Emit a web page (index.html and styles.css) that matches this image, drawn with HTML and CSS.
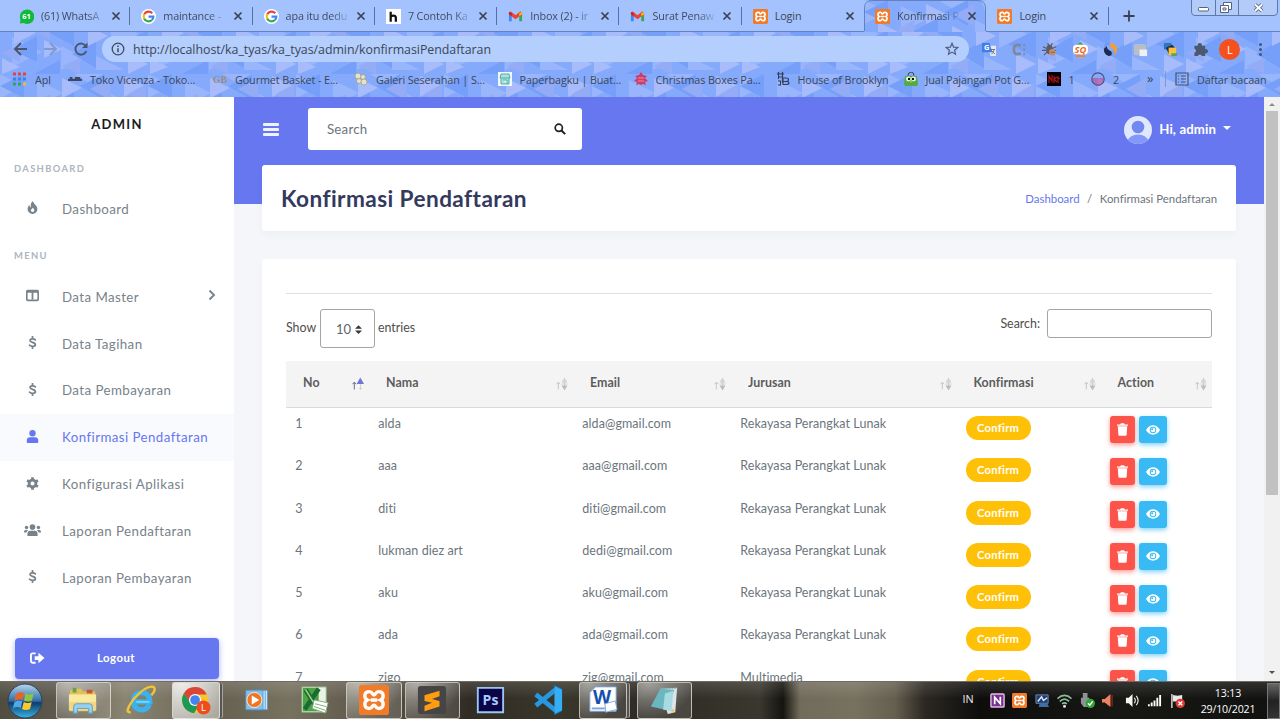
FILE: index.html
```html
<!DOCTYPE html>
<html lang="id">
<head>
<meta charset="utf-8">
<title>Konfirmasi Pendaftaran</title>
<link rel="stylesheet" href="styles.css">
</head>
<body>
<svg class="defs" width="0" height="0">
  <defs>
    <linearGradient id="glass" x1="0" y1="0" x2="0" y2="1"><stop offset="0" stop-color="#b7d7ef"/><stop offset=".5" stop-color="#2f6da5"/><stop offset=".55" stop-color="#123a68"/><stop offset="1" stop-color="#37b5e6"/></linearGradient>
    <pattern id="tri" width="148" height="74" patternUnits="userSpaceOnUse">
      <rect width="148" height="74" fill="#86aafb"/>
      <path fill="#99b6fc" d="M0 0l24 12L0 24zM37 6l26 13-26 13zM74 0h30v18zM111 20l28 14-28 14zM12 37l30 15-30 15zM61 46l24 12-24 12zM96 56l28 14H96z"/>
      <path fill="#769ffa" d="M24 0v24L0 12zM74 18v28L48 32zM104 0v26L80 12zM148 30v28l-28-14zM37 36v26L12 50zM96 40v28L72 54zM60 60v14H34z"/>
      <path fill="#a8bbfb" d="M14 22l22 11-22 11zM62 4l20 10-20 10zM88 26l20 10-20 10zM124 2l22 10-22 11zM44 40l18 9-18 9zM128 54l20 10-20 10zM2 58l18 9-18 7z"/>
      <path fill="#94abf6" d="M110 4v22L90 15zM50 20v20L32 30zM146 10v20l-18-10zM80 58v16L62 66zM20 44v18L2 53z"/>
    </pattern>
    <symbol id="x" viewBox="0 0 10 10"><path d="M1.500 1.500l7 7m0-7l-7 7" stroke="#39434f" stroke-width="1.700"/></symbol>
    <symbol id="goog" viewBox="0 0 16 16"><circle cx="8" cy="8" r="8" fill="#fff"/><g fill="none" stroke-width="2.300"><path d="M12 4.500A5.200 5.200 0 0 0 3.400 5.700" stroke="#ea4335"/><path d="M3.400 5.700a5.200 5.200 0 0 0 0 4.600" stroke="#fbbc05"/><path d="M3.400 10.300A5.200 5.200 0 0 0 11.600 11.800" stroke="#34a853"/><path d="M11.600 11.800A5.200 5.200 0 0 0 13.200 8.100H8" stroke="#4285f4"/></g></symbol>
    <symbol id="gmail" viewBox="0 0 16 16"><path fill="#4285f4" d="M1 4.500v8.500h3V6z"/><path fill="#34a853" d="M15 4.500v8.500h-3V6z"/><path fill="#ea4335" d="M1 3.500L3 2.700l5 4 5-4 2 .800v2L8 11 1 5.500z"/><path fill="#c5221f" d="M1 3.300l3 1v3.500l-3-2.300z"/><path fill="#fbbc04" d="M15 3.300l-3 1v3.500l3-2.300z"/></symbol>
    <symbol id="xampp" viewBox="0 0 16 16"><rect width="16" height="16" rx="1.500" fill="#f37b27"/><path d="M5.500 3.500c-3 0-3 3.600-1 4.500-2 .900-2 4.500 1 4.500 1.800 0 1.500-1.800 2.500-1.800s.700 1.800 2.500 1.800c3 0 3-3.600 1-4.500 2-.900 2-4.500-1-4.500-1.800 0-1.500 1.800-2.500 1.800s-.700-1.800-2.500-1.800zM6.300 8h3.400" fill="none" stroke="#fff" stroke-width="1.800"/></symbol>
    <symbol id="usd" viewBox="0 0 12 16"><path d="M9.500 4.700C8 3.300 3 2.900 3 5.500c0 2.600 6.500 1.900 6.500 5 0 3-5.500 2.600-7 .900M6 .800V3m0 10v2.200" fill="none" stroke="currentColor" stroke-width="2.200" stroke-linecap="round"/></symbol>
    <symbol id="trash" viewBox="0 0 14 16"><path fill="#fff" d="M0 1.500h4L5 0h4l1 1.500h4v1.700H0zM1 4h12l-.700 10.500a1.500 1.500 0 0 1-1.500 1.500H3.200a1.500 1.500 0 0 1-1.500-1.500z"/></symbol>
    <symbol id="eye" viewBox="0 0 18 12"><path fill="#fff" d="M0 6C4-2 14-2 18 6 14 14 4 14 0 6z"/><circle cx="9" cy="6" r="4.200" fill="#3abaf4"/><circle cx="9" cy="6" r="3" fill="#fff"/><circle cx="8" cy="5" r="1.300" fill="#3abaf4"/></symbol>
    <symbol id="sort" viewBox="0 0 12 14"><path d="M2.300 12.500V5.200M.500 7.200l1.800-2 1.800 2M8.500 3v9" fill="none" stroke="#c7c7c7" stroke-width="1"/><path fill="#d2d2d2" d="M8.500 .500l3 5h-6z"/><path d="M5.500 7h6" stroke="#d2d2d2"/><path fill="#bcbcbc" d="M8.500 13.500l3-5h-6z"/></symbol>
    <symbol id="sorta" viewBox="0 0 12 14"><path d="M2.300 12.500V5.200M.500 7.200l1.800-2 1.800 2" fill="none" stroke="#6b6b8c" stroke-width="1"/><path d="M8.500 7v6M7 11.500h3" stroke="#d2d2d2"/><path fill="#6d76dc" d="M8.300 .500L12 7H4.600z"/></symbol>
  </defs>
</svg>
<div class="screen">
  <header class="chrome">
    <svg class="pattern" width="1280" height="97"><rect width="1280" height="97" fill="url(#tri)"/></svg>
    <div class="tabs">
      <div class="tab"><svg class="fav" viewBox="0 0 16 16"><path d="M1 15.500L1.500 11A7.700 7.700 0 1 1 5 15z" fill="#12b83b"/><text x="8" y="11" font-size="8" font-weight="700" text-anchor="middle" fill="#fff">61</text></svg><span class="t">(61) WhatsA</span><svg class="cl"><use href="#x"/></svg></div>
      <div class="tab"><svg class="fav"><use href="#goog"/></svg><span class="t">maintance -</span><svg class="cl"><use href="#x"/></svg></div>
      <div class="tab"><svg class="fav"><use href="#goog"/></svg><span class="t">apa itu dedu</span><svg class="cl"><use href="#x"/></svg></div>
      <div class="tab"><svg class="fav" viewBox="0 0 16 16"><rect width="16" height="16" fill="#fff"/><path d="M5 3v10.500M5 9q0-2 2.700-2t2.800 2v4.500" fill="none" stroke="#111" stroke-width="2.400"/></svg><span class="t">7 Contoh Ka</span><svg class="cl"><use href="#x"/></svg></div>
      <div class="tab"><svg class="fav"><use href="#gmail"/></svg><span class="t">Inbox (2) - ir</span><svg class="cl"><use href="#x"/></svg></div>
      <div class="tab"><svg class="fav"><use href="#gmail"/></svg><span class="t">Surat Penaw</span><svg class="cl"><use href="#x"/></svg></div>
      <div class="tab nosep"><svg class="fav"><use href="#xampp"/></svg><span class="t full">Login</span><svg class="cl"><use href="#x"/></svg></div>
      <div class="tab active"><svg class="tabbg" width="122" height="32"><path d="M0 0h122v32H0z" fill="url(#tri)"/><path d="M0 0v22Q1 1 7 .500H0zM122 0v22Q121 1 115 .500h7z" fill="#a3c2fe"/><path d="M.500 31V8Q.500 .500 8 .500h106q7.500 0 7.500 7.500v23" fill="none" stroke="#6382bd"/></svg><svg class="fav"><use href="#xampp"/></svg><span class="t">Konfirmasi P</span><svg class="cl"><use href="#x"/></svg></div>
      <div class="tab"><svg class="fav"><use href="#xampp"/></svg><span class="t full">Login</span><svg class="cl"><use href="#x"/></svg></div>
      <svg class="plus" viewBox="0 0 12 12"><path d="M6 .500v11M.500 6h11" stroke="#39434f" stroke-width="1.800"/></svg>
      <svg class="winbtn" viewBox="0 0 87 16"><path d="M.500 0v12q0 3.500 3.500 3.500h79q3.500 0 3.500-3.500V0M24.500 0v15M47.500 0v15" fill="#b3cbf8" stroke="#5f79a6"/><g fill="#fff" stroke="#51637f"><rect x="7.500" y="7.500" width="10" height="3.500" rx="1"/><path d="M32.500 2.500h8v7h-8z"/><path d="M29.500 5.500h8v7h-8z"/><path d="M32 8h3v2h-3z"/></g><path d="M64 4.500l7 6.500m0-6.500L64 11" stroke="#51637f" stroke-width="3.600"/><path d="M64 4.500l7 6.500m0-6.500L64 11" stroke="#fff" stroke-width="1.900"/></svg>
    </div>
    <div class="toolbar">
      <svg class="nav" viewBox="0 0 90 26"><g fill="none" stroke-width="1.900"><path d="M27 13H15.500m5.500-6l-6 6 6 6" stroke="#46566d"/><path d="M44 13h11.500M50 7l6 6-6 6" stroke="#7f9bd0"/><path d="M86 10.500A5.600 5.600 0 1 0 86.300 15" stroke="#46566d"/></g><path d="M87.500 6.500V12H82z" fill="#46566d"/></svg>
      <div class="url">
        <svg width="14" height="14" viewBox="0 0 14 14"><circle cx="7" cy="7" r="5.800" fill="none" stroke="#3f4c5f" stroke-width="1.300"/><path d="M7 6.200v4M7 3.500v1.500" stroke="#3f4c5f" stroke-width="1.500"/></svg>
        <span class="addr">http://localhost/ka_tyas/ka_tyas/admin/konfirmasiPendaftaran</span>
        <svg class="star" width="14" height="14" viewBox="0 0 14 14"><path d="M7 1.300l1.600 3.800 4.100.400-3.100 2.700.9 4L7 10.100l-3.500 2.100.9-4L1.300 5.500l4.100-.400z" fill="none" stroke="#4d5f7c" stroke-width="1.200"/></svg>
      </div>
      <div class="exts">
        <svg viewBox="0 0 16 16"><path fill="#e6e8ec" d="M6 4h9v11H9z"/><path fill="#3f7de8" d="M0 1h8l3 10H0z"/><text x="2" y="9" font-size="8" fill="#fff" font-weight="700">G</text><path d="M9 8h5m-1 0q-1 4-3 5m0-4l4 4" stroke="#657387" fill="none"/></svg>
        <svg viewBox="0 0 16 16"><path d="M9.500 4Q2 1 2 8t7.500 4" fill="none" stroke="#7f8997" stroke-width="2.800"/><path d="M13 2v2m0 3v2m0 3v2" stroke="#7f8997" stroke-width="2"/></svg>
        <svg viewBox="0 0 16 16"><path d="M1 5l4 2M0 9h5M2 14l4-4M6 1l2 4M11 1L9 5M15 5l-4 2M15 9h-4" stroke="#565c66" stroke-width="1.300"/><ellipse cx="8" cy="8" rx="3.500" ry="5" fill="#5c5d62"/><circle cx="11" cy="11" r="3.500" fill="#c68b6b"/><path d="M9 11h5" stroke="#765"/></svg>
        <svg viewBox="0 0 16 16"><path fill="#3cae45" d="M3 4l5-4 4 4z"/><rect y="3" width="16" height="10" rx="4" fill="#fff"/><text x="8" y="11.500" font-size="10" font-weight="700" font-style="italic" text-anchor="middle" fill="#ee6a1e">SQ</text><path d="M3 15h10" stroke="#f58220" stroke-width="2"/></svg>
        <svg viewBox="0 0 16 16"><path d="M6.500 1.500C0 2 0 8 5 9.500c3 .800 3.500 2 2.500 5C0 14-2 3 6.500 1.500z" fill="#1d2d50"/><path d="M4 4q0 4 4 5.500 2 1 1 4.500L6 15Q1 13 1 8z" fill="#1d2d50"/><path d="M8 1q7 1 7 7 0 4-3 6 1-5-2-7Q7 5 8 1z" fill="#f79d2c"/></svg>
        <svg viewBox="0 0 16 16"><rect x="1" y="2" width="13" height="12" rx="2" fill="#b6bec8"/><rect x="7" y="8" width="8" height="7" fill="#eef0f2"/></svg>
        <svg viewBox="0 0 16 16"><path fill="#2e77be" d="M1 1h8v7H1z"/><path fill="#222d35" d="M3 6l7-3 4 5-7 6z"/><path fill="#ffc13b" d="M6 6h8v8H6z"/><path fill="#55a84b" d="M9 12h6v3H9z"/></svg>
        <svg viewBox="0 0 16 16"><path fill="#4a596e" d="M1.500 4H5a2.300 2.300 0 1 1 4.400 0H13v3.600a2.300 2.300 0 1 1 0 4.400v3H9.500a2.200 2.200 0 0 0-4.300 0H1.500v-3.600a2.200 2.200 0 0 0 0-4.300z"/></svg>
      </div>
      <span class="avatar">L</span>
      <span class="kebab"><i></i><i></i><i></i></span>
    </div>
    <div class="marks">
      <span class="bm b1"><svg viewBox="0 0 14 14"><path stroke="#e0443c" stroke-width="3" stroke-dasharray="3 2" d="M0 2h14"/><path stroke="#3b82e8" stroke-width="3" stroke-dasharray="3 2" d="M0 7h14"/><path stroke="#35a35b" stroke-width="3" stroke-dasharray="3 2" d="M0 12h9"/><path stroke="#f4b82c" stroke-width="3" d="M10 12h3"/></svg>Apl</span>
      <span class="bm b2"><svg viewBox="0 0 16 14"><path d="M0 8h16M2 6h3m3 0h6" stroke="#414962" stroke-width="2.500"/></svg>Toko Vicenza - Toko...</span>
      <span class="bm b3"><svg viewBox="0 0 16 14"><text x="8" y="11" text-anchor="middle" font-family="Liberation Serif" font-size="11" font-weight="700" textLength="16" fill="#a08a78">GB</text></svg>Gourmet Basket - E...</span>
      <span class="bm b4"><svg viewBox="0 0 14 14"><g fill="#e6e1ca" stroke="#9b9b80" stroke-width=".7"><circle cx="4" cy="4" r="3"/><circle cx="9" cy="5" r="2.500"/><circle cx="5" cy="9" r="2.500"/><circle cx="10" cy="10" r="3"/></g></svg>Galeri Seserahan | S...</span>
      <span class="bm b5"><svg viewBox="0 0 14 14"><path fill="#f2f8fa" d="M0 0h14v14H0z"/><path d="M3 2h8l1 4H2zM3 6v6h8V6M5 8h4v4" fill="#aee0dc" stroke="#4cb0ab"/></svg>Paperbagku | Buat...</span>
      <span class="bm b6"><svg viewBox="0 0 14 14"><path fill="#ce3c68" d="M7 0l2 3 4 1-2 2 3 3-3 1 1 3-3-1-2 1-2-1-3 1 1-3-3-1 3-3-2-2 4-1z"/><path d="M4 6h6M4 9h6" stroke="#e78cab"/></svg>Christmas Boxes Pa...</span>
      <span class="bm b7"><svg viewBox="0 0 14 14"><path d="M2.500 0v7M6.500 0v11M1 2h7M2 5h5M7 6h3q2.500 0 2.500 1.700T10 9.500H7m3 0q3 0 3 1.500t-3 1.500H7V6M2 9h2.500v4H2" fill="none" stroke="#333f58" stroke-width="1.100"/></svg>House of Brooklyn</span>
      <span class="bm b8"><svg viewBox="0 0 14 14"><path d="M4 4q0-4 3-4t3 4" fill="none" stroke="#3c4a42"/><path fill="#4fae3f" d="M1 4h12l1 8-1 2H1l-1-2z"/><circle cx="4.500" cy="7" r="2.400" fill="#fff"/><circle cx="9.500" cy="7" r="2.400" fill="#fff"/><circle cx="5" cy="7" r="1.200"/><circle cx="9" cy="7" r="1.200"/><path fill="#f6b83d" d="M6 9h2l-1 2z"/></svg>Jual Pajangan Pot G...</span>
      <span class="bm b9"><svg viewBox="0 0 14 14"><path d="M0 0h14v14H0z"/><path d="M2 11V4l3 5V3m2 8V4m0 3l3-2m-3 2l3 3m1-6v7m0-4l2-1" fill="none" stroke="#b61218" stroke-width="1.200"/></svg>1</span>
      <span class="bm b10"><svg viewBox="0 0 14 14"><circle cx="7" cy="7" r="6.200" fill="none" stroke="#4a4f80" stroke-width="1.200"/><path d="M1 7h12M2 9h10M3 11h8M5 13h4" stroke="#bd3779" stroke-width="1.200"/></svg>2</span>
      <span class="more">»</span>
      <span class="bm b11"><svg viewBox="0 0 14 14"><path d="M1 1h12v12H1zM3 4h1m2 0h5M3 7h1m2 0h5M3 10h1m2 0h5" fill="none" stroke="#45536b" stroke-width="1.200"/></svg>Daftar bacaan</span>
    </div>
  </header>

  <main class="view">
    <aside class="side">
      <div class="brand">ADMIN</div>
      <div class="sec">DASHBOARD</div>
      <a class="item"><svg viewBox="0 0 12 16"><path fill="currentColor" d="M6.500 0c.5 4 5.500 5 5.500 10a6 6 0 0 1-12 0C0 7.500 1 6 2.300 4.800 2.500 7 3 7.500 4 8 3.500 4.500 4 2 6.500 0z"/><path fill="#fff" d="M6.500 8c.3 1.500 1.800 1.800 1.800 3.300a2.200 2.200 0 0 1-4.400 0c0-1.400 2.300-1.700 2.600-3.300z"/></svg>Dashboard</a>
      <div class="sec second">MENU</div>
      <a class="item"><svg viewBox="0 0 16 14"><rect x="1" y="1" width="14" height="12" rx="1" fill="none" stroke="currentColor" stroke-width="2"/><path d="M1 2.500h14M8 2v10" stroke="currentColor" stroke-width="2.200"/></svg>Data Master<svg class="chev" viewBox="0 0 8 12"><path d="M1.500 1.500L6 6l-4.500 4.500" fill="none" stroke="currentColor" stroke-width="1.900"/></svg></a>
      <a class="item"><svg><use href="#usd"/></svg>Data Tagihan</a>
      <a class="item"><svg><use href="#usd"/></svg>Data Pembayaran</a>
      <a class="item on"><svg viewBox="0 0 14 16"><circle cx="7" cy="4" r="3.900" fill="currentColor"/><path fill="currentColor" d="M0 15v-2q0-4 4-4h6q4 0 4 4v2q0 1-1 1H1q-1 0-1-1z"/></svg>Konfirmasi Pendaftaran</a>
      <a class="item"><svg viewBox="0 0 16 16"><circle cx="8" cy="8" r="4.200" fill="none" stroke="currentColor" stroke-width="3.400"/><path d="M8 .300v3M8 12.700v3M1.300 4.200l2.600 1.500M12.100 10.300l2.600 1.500M1.300 11.800l2.600-1.500M12.100 5.700l2.600-1.500" stroke="currentColor" stroke-width="3.400"/></svg>Konfigurasi Aplikasi</a>
      <a class="item"><svg class="wide" viewBox="0 0 20 14"><g fill="currentColor"><circle cx="10" cy="3.500" r="3.300"/><circle cx="3" cy="4" r="2"/><circle cx="17" cy="4" r="2"/><path d="M4 14v-2q0-4 3.500-4h5q3.500 0 3.500 4v2zM0 10V9q0-2 2-2h3q-2 1.500-2 3zM20 10V9q0-2-2-2h-3q2 1.500 2 3z"/></g></svg>Laporan Pendaftaran</a>
      <a class="item"><svg><use href="#usd"/></svg>Laporan Pembayaran</a>
      <a class="logout"><svg viewBox="0 0 16 12"><path d="M6 1H3Q1 1 1 3v6q0 2 2 2h3" fill="none" stroke="#fff" stroke-width="2"/><path fill="#fff" d="M5 4h4V.500L15.500 6 9 11.500V8H5z"/></svg><span>Logout</span></a>
    </aside>
    <section class="content">
      <nav class="top">
        <span class="burger"><i></i><i></i><i></i></span>
        <div class="find"><span>Search</span><svg viewBox="0 0 14 14"><circle cx="5.600" cy="5.600" r="4.200" fill="none" stroke="#222" stroke-width="2"/><path d="M8.700 8.700L13 13" stroke="#222" stroke-width="2.400"/></svg></div>
        <svg class="me" viewBox="0 0 28 28"><defs><clipPath id="round"><circle cx="14" cy="14" r="14"/></clipPath></defs><circle cx="14" cy="14" r="14" fill="#e0e8ff"/><g clip-path="url(#round)"><circle cx="14" cy="11" r="6.300" fill="#7288ee"/><ellipse cx="14" cy="25" rx="10" ry="6.500" fill="#8298fa"/></g></svg>
        <span class="hi">Hi, admin</span><i class="caret"></i>
      </nav>
      <div class="card title"><h1>Konfirmasi Pendaftaran</h1><div class="crumb"><a>Dashboard</a><span>/</span><b>Konfirmasi Pendaftaran</b></div></div>
      <div class="card body">
        <div class="ctl">
          <div class="len"><span class="w-show">Show</span><span class="sel">10<svg viewBox="0 0 8 10"><path fill="#343a40" d="M4 0l4 4H0zM4 10l4-4H0z"/></svg></span><span>entries</span></div>
          <div class="flt"><span>Search:</span><span class="inp"></span></div>
        </div>
        <div class="row head"><div>No<svg><use href="#sorta"/></svg></div><div>Nama<svg><use href="#sort"/></svg></div><div>Email<svg><use href="#sort"/></svg></div><div>Jurusan<svg><use href="#sort"/></svg></div><div>Konfirmasi<svg><use href="#sort"/></svg></div><div>Action<svg><use href="#sort"/></svg></div></div>
        <div class="row"><div>1</div><div>alda</div><div>alda@gmail.com</div><div>Rekayasa Perangkat Lunak</div><div><span class="pill">Confirm</span></div><div class="act"><span class="del"><svg><use href="#trash"/></svg></span><span class="see"><svg><use href="#eye"/></svg></span></div></div>
        <div class="row"><div>2</div><div>aaa</div><div>aaa@gmail.com</div><div>Rekayasa Perangkat Lunak</div><div><span class="pill">Confirm</span></div><div class="act"><span class="del"><svg><use href="#trash"/></svg></span><span class="see"><svg><use href="#eye"/></svg></span></div></div>
        <div class="row"><div>3</div><div>diti</div><div>diti@gmail.com</div><div>Rekayasa Perangkat Lunak</div><div><span class="pill">Confirm</span></div><div class="act"><span class="del"><svg><use href="#trash"/></svg></span><span class="see"><svg><use href="#eye"/></svg></span></div></div>
        <div class="row"><div>4</div><div>lukman diez art</div><div>dedi@gmail.com</div><div>Rekayasa Perangkat Lunak</div><div><span class="pill">Confirm</span></div><div class="act"><span class="del"><svg><use href="#trash"/></svg></span><span class="see"><svg><use href="#eye"/></svg></span></div></div>
        <div class="row"><div>5</div><div>aku</div><div>aku@gmail.com</div><div>Rekayasa Perangkat Lunak</div><div><span class="pill">Confirm</span></div><div class="act"><span class="del"><svg><use href="#trash"/></svg></span><span class="see"><svg><use href="#eye"/></svg></span></div></div>
        <div class="row"><div>6</div><div>ada</div><div>ada@gmail.com</div><div>Rekayasa Perangkat Lunak</div><div><span class="pill">Confirm</span></div><div class="act"><span class="del"><svg><use href="#trash"/></svg></span><span class="see"><svg><use href="#eye"/></svg></span></div></div>
        <div class="row"><div>7</div><div>zigo</div><div>zig@gmail.com</div><div>Multimedia</div><div><span class="pill">Confirm</span></div><div class="act"><span class="del"><svg><use href="#trash"/></svg></span><span class="see"><svg><use href="#eye"/></svg></span></div></div>
      </div>
    </section>
    <div class="scroll"><i class="up"></i><div class="thumb"></div><i class="down"></i></div>
  </main>

  <footer class="bar">
    <div class="start"><svg viewBox="0 0 36 36"><circle cx="18" cy="18" r="17" fill="url(#glass)" stroke="#29415a"/><path fill="#e9622b" d="M9 11q4-3 8-1l-1.500 7q-4-2-8 1z"/><path fill="#8fc641" d="M18.500 10.500q4 2 8 0L25 17.500q-4 2-8 0z"/><path fill="#4da9e8" d="M7.300 19.300q4-2.500 8-.8L13.700 25q-4-2-7.700.500z"/><path fill="#fdc82f" d="M16.700 19q4 2 8 0L23 26q-4 2-8 0z"/></svg></div>
    <div class="app box"><svg viewBox="0 0 32 32"><path fill="#e5bf58" d="M2 6l4-2h8l2 3h13v21H2z"/><path fill="#63a34b" d="M5 3h4v5H5z"/><path fill="#c9543c" d="M20 5h6v4h-6z"/><path fill="#fae9a0" d="M1 10h29v17H1z"/><path fill="#f3d77c" d="M1 18h29v9H1z"/><path fill="#98d0ef" stroke="#5aa1cd" d="M6 30v-7q0-3 3-3h14q3 0 3 3v7h-4v-5H10v5z"/></svg></div>
    <div class="app"><svg viewBox="0 0 32 32"><path d="M25 21q-3 6-9 5.500-8-1-8-9.500T16.500 8Q25 8 25.500 18H10" fill="none" stroke="#3ab2ee" stroke-width="5.500"/><path d="M25 18H11" stroke="#8cdcfb" stroke-width="1.500"/><path d="M5 29Q-3 30 9 14 22 0 29 2q4 2-2 9" fill="none" stroke="#f4c437" stroke-width="2.600"/></svg></div>
    <div class="app box multi lit"><svg viewBox="0 0 32 32"><circle cx="15" cy="16" r="14" fill="#f6c52f"/><path fill="#dc4437" d="M3 9a14 14 0 0 1 24.500 1H15l-5 9z"/><path fill="#1b9a55" d="M3 9a14 14 0 0 0 11 21l6-10-9 0z"/><circle cx="15" cy="16" r="6.500" fill="#fff"/><circle cx="15" cy="16" r="5.200" fill="#4384ee"/><circle cx="24" cy="24" r="7.500" fill="#ee4d20"/><text x="24" y="27.500" font-size="10" fill="#fff" text-anchor="middle">L</text></svg></div>
    <div class="app"><svg class="sm" viewBox="0 0 32 32"><path fill="#c8e4f6" stroke="#5795c4" d="M10 3h20v26H10zM7 3h20v26H7z"/><path fill="#86bfe8" stroke="#4f8fc1" d="M1 3h23v26H1z"/><circle cx="12.500" cy="16" r="10" fill="#f07522" stroke="#fff"/><path fill="#fff" d="M9 10l10 6-10 6z"/></svg></div>
    <div class="app"><svg viewBox="0 0 32 32"><path fill="#e9f3e3" stroke="#87ae79" d="M2 2h26v27H2z"/><path fill="#50a247" d="M3 3h17v25H3z"/><path d="M6 5l13 21M20 4L5 26" stroke="#196d34" stroke-width="5"/><path d="M6 5l13 21" stroke="#a3d880" stroke-width="1.500"/><path fill="#fff" stroke="#7caa75" d="M15 16l15 3-3 11-14-5z"/><path d="M16 20l12 3M15 23l12 4" stroke="#7caa75"/></svg></div>
    <div class="app box"><svg><use href="#xampp"/></svg></div>
    <div class="app box"><svg viewBox="0 0 32 32"><rect x="1" y="1" width="30" height="30" rx="3" fill="#454545"/><path fill="#ff9c12" d="M8 11l16-5v6l-8 3 8 2v6L8 28v-6l8-3-8-2z"/></svg></div>
    <div class="app"><svg viewBox="0 0 32 32"><path fill="#0b0548" stroke="#9bc5f2" stroke-width="2" d="M3 3h27v26H3z"/><text x="16.500" y="21.500" text-anchor="middle" font-size="15" font-weight="700" fill="#a7ccff">Ps</text></svg></div>
    <div class="app"><svg viewBox="0 0 32 32"><path fill="#1374bd" d="M23 0l8 4v24l-8 4z"/><path d="M24 5L3 22M24 27L3 10" stroke="#2798e0" stroke-width="5"/><path fill="#35aef5" d="M23 1l8 4v22l-8 4z"/></svg></div>
    <div class="app box multi"><svg viewBox="0 0 32 32"><path fill="#fff" stroke="#7da3dc" d="M8 2h22v26H2V8z"/><text x="15" y="20" text-anchor="middle" font-size="20" font-weight="700" fill="#164fae">W</text><path fill="#fff" stroke="#7da3dc" d="M18 20l11-3 2 9-12 3z"/><path d="M4 25h14" stroke="#7da3dc" stroke-width="2"/></svg></div>
    <div class="app box"><svg viewBox="0 0 32 32"><path fill="#dce6e7" d="M12 4l18-1-2 26-8 2z"/><path fill="#f2c46b" d="M24 25l4 2-4 3z"/><path fill="#6ab7c2" d="M12 4l15 1-7 22-18-4z"/><path fill="#a7dbe1" d="M17 9l9-3-2 22-9-2z"/><path d="M12 3.500h17" stroke="#8b999c" stroke-dasharray="2 1"/></svg></div>
    <div class="space"></div>
    <span class="lang">IN</span>
    <div class="tray">
      <svg viewBox="0 0 16 16"><rect x="1" y="1" width="14" height="14" rx="1" fill="#78328d" stroke="#e5bdec" stroke-width="1.500"/><path d="M5 12V4.500l6 7V4" fill="none" stroke="#fff" stroke-width="1.800"/></svg>
      <svg><use href="#xampp"/></svg>
      <svg viewBox="0 0 16 16"><path fill="#203f70" stroke="#718ab0" d="M1 2h13v9H1z"/><path d="M3 9l4-5 2 4 4-3" fill="none" stroke="#e1ecff" stroke-width="1.500"/><path fill="#3f6da5" d="M5 11h8l2 4H4z"/></svg>
      <svg viewBox="0 0 16 16"><g fill="none" stroke="#8fbd9c" stroke-width="1.700"><path d="M.500 6Q8-1 15.500 6M3 9q5-5 10 0M5.500 11.700q2.500-2.500 5 0"/></g><circle cx="8" cy="14" r="1.600" fill="#d9ebdf"/></svg>
      <svg viewBox="0 0 16 16"><path fill="#8d9296" d="M3 0h5v5h2v6l-3 4H4L1 11V5h2z"/><circle cx="11" cy="11" r="5" fill="#32a338"/><path d="M8.500 11l2 2 3-4" fill="none" stroke="#fff" stroke-width="1.500"/></svg>
      <svg viewBox="0 0 16 16"><path fill="#f08263" d="M0 6.500h3L9 1v14l-6-5H0z"/><path fill="#80291e" d="M10 2h1.500v12H10z"/></svg>
      <svg viewBox="0 0 16 16"><path fill="#f4f4f4" d="M1 5h3l4-4v14l-4-4H1z"/><path d="M10 5q2 3 0 6M12 3q4 5 0 10" fill="none" stroke="#eee" stroke-width="1.200"/></svg>
      <svg viewBox="0 0 16 16"><path fill="#fff" d="M1 12h2v2H1zM4 10h2v4H4zM7 8h2v6H7zM10 5h2v9h-2zM13 2h2v12h-2z"/></svg>
      <svg viewBox="0 0 16 16"><path d="M2 1v15" stroke="#ddd" stroke-width="1.500"/><path fill="#e9e9e9" d="M3 2l5 1 5-1v7H3z"/><circle cx="11" cy="11" r="5" fill="#dd3a33"/><path d="M9 9l4 4m0-4l-4 4" stroke="#fff" stroke-width="1.600"/></svg>
    </div>
    <div class="clock"><span>13:13</span><span>29/10/2021</span></div>
    <div class="desk"></div>
  </footer>
</div>
</body>
</html>
```
FILE: styles.css
```css
* { box-sizing: border-box; }
body { margin: 0; overflow: hidden; font-family: Lato, "Open Sans", sans-serif; }
svg { display: block; flex: none; }
.defs { position: absolute; }
.screen { width: 1280px; height: 719px; display: flex; flex-direction: column; overflow: hidden; }

/* browser window */
.chrome { height: 97px; flex: none; position: relative; font-family: "Open Sans", sans-serif; color: #3b4656; border-bottom: 1px solid #6378de; }
.pattern { position: absolute; inset: 0; }
.chrome > div { position: relative; }
.tabs { height: 32px; background: #a3c2fe; border-bottom: 1px solid #6382bd; display: flex; padding-left: 8px; font-size: 10.8px; }
.tab { width: 122.3px; height: 32px; flex: none; display: flex; align-items: center; padding-left: 11px; position: relative; }
.tab::after { content: ""; position: absolute; right: 0; top: 7px; width: 1px; height: 18px; background: #53709f; }
.nosep::after, .active::after { display: none; }
.tabbg { position: absolute; left: 0; top: 0; }
.fav { width: 15px; height: 15px; position: relative; }
.t { position: relative; width: 63px; margin-left: 7px; padding-bottom: 1px; white-space: nowrap; letter-spacing: -.15px; color: transparent; background: linear-gradient(90deg, #3b4656 72%, rgba(59,70,86,.15) 99%); -webkit-background-clip: text; background-clip: text; }
.full { color: #3b4656; background: none; }
.cl { width: 10px; height: 10px; margin-left: 7px; position: relative; }
.plus { width: 12px; height: 12px; margin: 10px 0 0 14px; }
.winbtn { width: 87px; height: 16px; margin-left: auto; margin-right: 2px; }
.toolbar { height: 34px; display: flex; align-items: center; }
.nav { width: 90px; height: 26px; }
.url { width: 867px; height: 26px; margin-left: 12px; border-radius: 13px; background: #b4cefe; display: flex; align-items: center; padding: 0 10px 0 9px; }
.addr { margin-left: 8px; font-size: 12.4px; letter-spacing: -.04px; }
.star { margin-left: auto; }
.exts { display: flex; gap: 15.200px; margin-left: 13px; }
.exts svg { width: 15px; height: 15px; }
.avatar { width: 21px; height: 21px; border-radius: 50%; background: #f4511e; color: #fff; font-size: 11px; line-height: 21px; text-align: center; margin-left: 11px; }
.kebab { display: flex; flex-direction: column; gap: 2px; margin-left: 19px; }
.kebab i { width: 3px; height: 3px; border-radius: 50%; background: #46566d; }
.marks { height: 26px; display: flex; align-items: center; padding-left: 13px; font-size: 10.8px; }
.bm { display: flex; align-items: center; gap: 8px; white-space: nowrap; flex: none; letter-spacing: -.11px; }
.bm svg { width: 14px; height: 14px; }
.b1 { width: 55px; } .b2 { width: 145px; } .b3 { width: 141px; } .b4 { width: 143.500px; }
.b5 { width: 136px; } .b6 { width: 142px; } .b7 { width: 128px; } .b8 { width: 143px; }
.b9 { width: 44.500px; } .b10 { width: 56px; }
.more { width: 19px; border-right: 1px solid #7898dc; height: 16px; line-height: 14px; font-size: 13px; }
.b11 { margin-left: 9px; }

/* viewport */
.view { flex: 1; min-height: 0; display: flex; background: #f4f6f9; overflow: hidden; }
.side { width: 234px; background: #fff; flex: none; color: #78828a; }
.brand { height: 53.500px; padding-top: 3px; line-height: 48px; text-align: center; font-size: 13px; letter-spacing: 1.3px; font-weight: 700; color: #1b1b1b; }
.sec { height: 35px; padding-left: 14px; line-height: 35px; font-size: 9.4px; font-weight: 700; letter-spacing: 1.35px; color: #adb5bd; }
.second { height: 41px; line-height: 47px; }
.item { height: 46.85px; display: flex; align-items: center; font-size: 13.3px; letter-spacing: .43px; padding-left: 26px; white-space: nowrap; }
.item > svg { width: 13px; height: 13px; margin: 0 23px 2px 0; }
.item > svg.wide { width: 17px; height: 12px; margin: 0 21px 2px -2px; }
.item > svg.chev { width: 8px; height: 12px; margin: 0 18px 3px auto; }
.item.on { color: #6777ef; background: #f8fafd; }
.logout { margin: 36.500px 15px 0; height: 41px; background: #6777ef; border-radius: 4px; box-shadow: 0 2px 6px #acb5f6; color: #fff; display: flex; align-items: center; padding: 0 0 1px 15px; font-size: 11.4px; font-weight: 700; letter-spacing: .45px; }
.logout svg { width: 15px; height: 12px; }
.logout span { margin-left: 52px; }
.content { width: 1030px; flex: none; padding: 0 28px; background: linear-gradient(#6777ef 107px, #f4f6f9 107px); }
.top { height: 68px; display: flex; align-items: center; padding-bottom: 4px; color: #fff; }
.burger { width: 16px; margin: 1px 0 0 1px; display: flex; flex-direction: column; gap: 2.600px; }
.burger i { height: 2.800px; background: #f0f1fe; border-radius: 1px; }
.find { width: 274px; height: 42px; margin-left: 29px; background: #fff; border-radius: 3px; display: flex; align-items: center; justify-content: space-between; padding: 0 16px 1px 19px; color: #6c757d; font-size: 13.3px; letter-spacing: .2px; }
.find svg { width: 12px; height: 12px; }
.me { width: 28px; height: 28px; margin: 1px 0 0 auto; }
.hi { margin-left: 7px; font-size: 13.2px; font-weight: 700; letter-spacing: .12px; white-space: nowrap; }
.caret { border: 4px solid transparent; border-top-color: #fff; border-bottom: 0; margin: 0 5px 2px 7px; }
.card { background: #fff; border-radius: 3px; box-shadow: 0 4px 8px rgba(0,0,0,.03); }
.title { height: 66px; display: flex; align-items: center; justify-content: space-between; padding: 0 19px; }
h1 { margin: 0; font-size: 22.6px; letter-spacing: .42px; font-weight: 700; color: #34395e; padding-top: 1px; white-space: nowrap; }
.crumb { display: flex; font-size: 11.4px; color: #6c757d; letter-spacing: .01px; }
.crumb a { color: #6777ef; }
.crumb span { margin: 0 7.500px; }
.crumb b { font-weight: 400; }
.body { margin-top: 28px; height: 480px; padding: 34px 24px 0; }
.ctl { border-top: 1px solid #dfe0e2; height: 68px; display: flex; justify-content: space-between; align-items: flex-start; padding-top: 15px; color: #4e4e4e; font-size: 12.4px; }
.len { display: flex; height: 39px; line-height: 37px; }
.w-show { width: 34px; }
.sel { width: 55px; height: 39px; border: 1px solid #a5a5a5; border-radius: 3px; display: flex; align-items: center; padding: 1px 0 0 15px; margin-right: 3px; font-size: 13px; color: #5c646c; }
.sel svg { width: 7px; height: 9px; margin-left: 4px; }
.flt { display: flex; line-height: 29px; }
.inp { width: 165px; height: 29px; border: 1px solid #a5a5a5; border-radius: 3px; margin-left: 7px; }
.row { display: grid; grid-template-columns: 83px 204px 158px 226px 144px 111px; height: 42.3px; color: #6c757d; font-size: 12.5px; letter-spacing: .06px; }
.row > div { padding: 8px 0 0 9.300px; line-height: 16px; white-space: nowrap; }
.head { height: 47px; background: #f4f4f4; border-bottom: 1px solid #d9dadb; color: #5c5c5c; font-weight: 700; font-size: 12.4px; }
.head > div { display: flex; padding: 14px 5.500px 0 17px; justify-content: space-between; }
.head svg { width: 12px; height: 14px; margin-top: 2px; }
.row > div:nth-child(n+5) { padding-left: 8.600px; }
.row.head > div:nth-child(n+5) { padding-left: 16.500px; }
.pill { display: block; width: 65px; height: 24px; border-radius: 12px; background: #ffc107; color: #fff; font-weight: 700; font-size: 11.2px; line-height: 24px; text-align: center; letter-spacing: .3px; }
.row > .act { display: flex; gap: 4px; }
.del, .see { width: 25px; height: 27px; border-radius: 3px; display: flex; align-items: center; justify-content: center; }
.del { background: #fc544b; box-shadow: 0 2px 5px #fd9b96; }
.see { width: 28px; background: #3abaf4; box-shadow: 0 2px 5px #82d3f8; }
.del svg { width: 11px; height: 13px; }
.see svg { width: 14px; height: 10px; }
.scroll { width: 16px; background: #f1f1f1; display: flex; flex-direction: column; align-items: center; }
.scroll i { border: 3.500px solid transparent; flex: none; }
.up { border-top: 0 !important; border-bottom-color: #8c8c8c !important; margin: 6px 0 5px; }
.thumb { width: 12px; height: 384px; background: #c1c1c1; }
.down { border-bottom: 0 !important; border-top-color: #505050 !important; margin-top: auto; margin-bottom: 7px; }

/* desktop taskbar */
.bar { height: 38px; flex: none; position: relative; z-index: 1; display: flex; align-items: center; border-top: 1px solid #6f6b60; font-family: "Open Sans", sans-serif; color: #eee;
  background: linear-gradient(180deg, rgba(255,255,255,.13), transparent 45%), linear-gradient(90deg, #504c40 0, #5d594c 60px, #8a8472 125px, #676151 220px, #777160 290px, #554f43 390px, #302c24 470px, #39362b 560px, #2d2a23 650px, #3a372e 760px, #15140f 783px, #716b5b 800px, #777160 855px, #655f50 895px, #2b2822 925px, #0d0d0c 980px, #171714 1120px, #11110f 1280px); }
.start { width: 55px; padding-left: 7px; }
.start svg { width: 36px; height: 36px; }
.app { width: 58.1px; height: 37px; flex: none; display: flex; align-items: center; justify-content: center; padding-right: 2px; padding-bottom: 1px; position: relative; }
.app svg { width: 30px; height: 30px; position: relative; }
.app .sm { width: 24px; height: 26px; }
.box::before { content: ""; position: absolute; inset: 0 2px 0 1px; border: 1px solid rgba(230,228,215,.7); border-radius: 3px; background: radial-gradient(at 20% 0, rgba(255,255,255,.5), rgba(255,255,255,.12) 75%); }
.lit::before { background: radial-gradient(at 20% 0, rgba(255,255,255,.85), rgba(255,255,255,.45) 90%); }
.multi::before { right: 9px; box-shadow: 3px 0 0 -1px #555, 4px 0 0 -1px #aaa59a; }
.multi { padding-right: 8px; }
.space { flex: 1; }
.lang { font-size: 10.8px; margin-bottom: 5px; width: 27px; }
.tray { display: flex; gap: 7.500px; width: 205.500px; }
.tray svg { width: 15px; height: 15px; }
.clock { width: 66px; display: flex; flex-direction: column; align-items: center; font-size: 10.6px; line-height: 16px; letter-spacing: -.15px; color: #fff; }
.desk { width: 13px; height: 36px; margin-left: 6px; border: 1px solid #777; background: linear-gradient(#666, #222 50%, #333); }
```
